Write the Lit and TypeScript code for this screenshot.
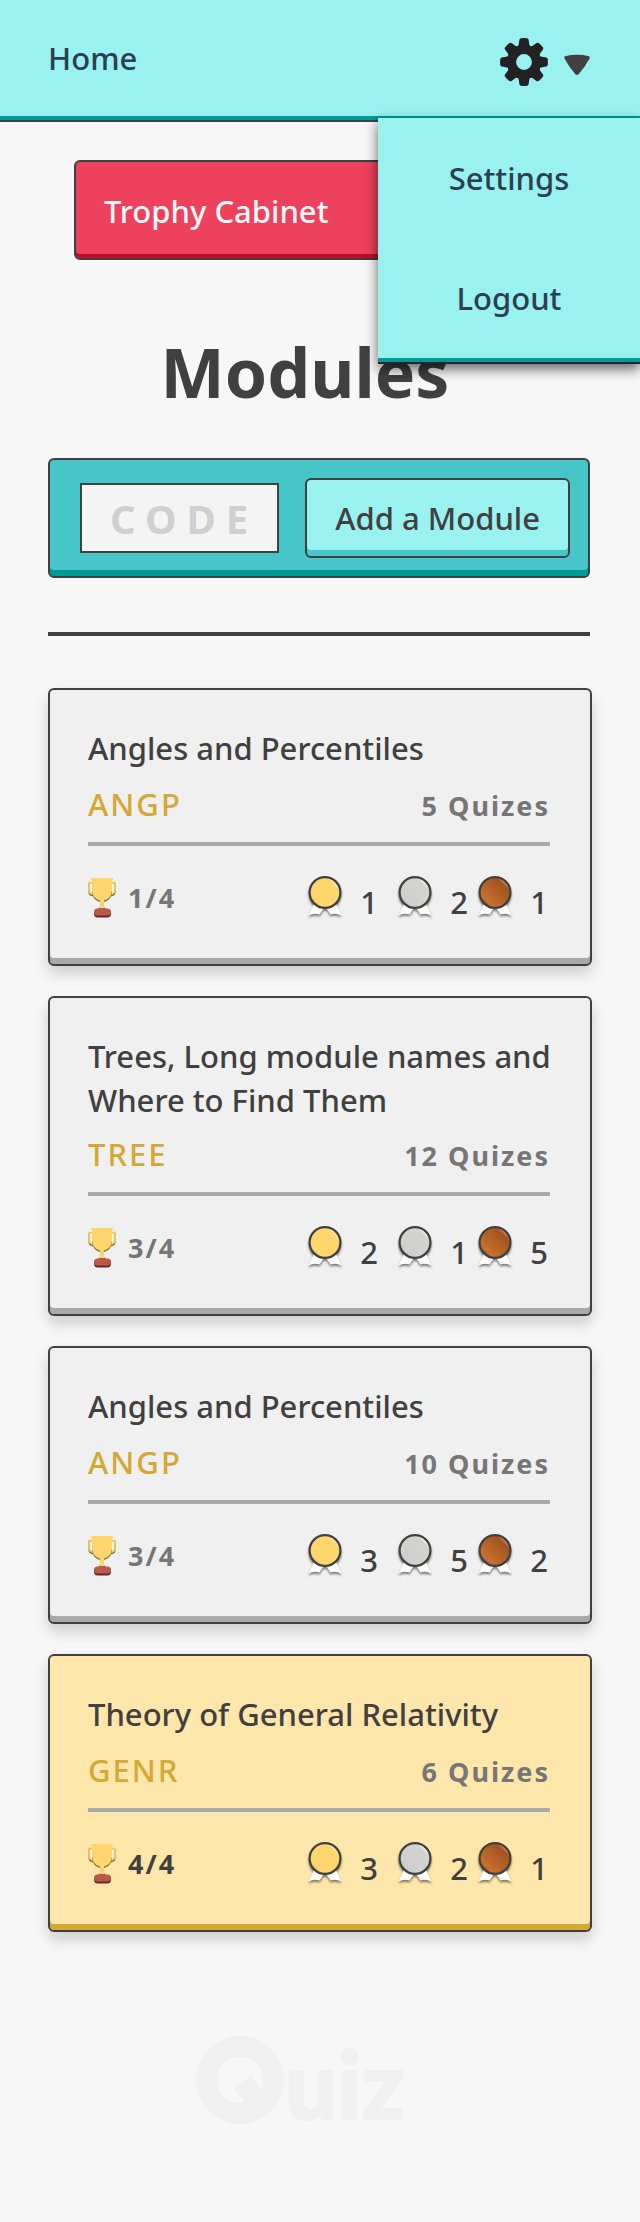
import { LitElement, html, svg, css, nothing } from "lit";
import { customElement, property, state } from "lit/decorators.js";
import { classMap } from "lit/directives/class-map.js";

interface Module {
  name: string;
  code: string;
  quizes: number;
  trophies: number;
  medals: [number, number, number];
}

const MODULES: Module[] = [
  { name: "Angles and Percentiles", code: "ANGP", quizes: 5, trophies: 1, medals: [1, 2, 1] },
  { name: "Trees, Long module names and Where to Find Them", code: "TREE", quizes: 12, trophies: 3, medals: [2, 1, 5] },
  { name: "Angles and Percentiles", code: "ANGP", quizes: 10, trophies: 3, medals: [3, 5, 2] },
  { name: "Theory of General Relativity", code: "GENR", quizes: 6, trophies: 4, medals: [3, 2, 1] },
];

const MEDAL_KINDS = ["gold", "silver", "bronze"] as const;
type MedalKind = (typeof MEDAL_KINDS)[number];

const MEDAL_COLOURS: Record<MedalKind, [string, string, string, string]> = {
  // lower edge, face start, face end, upper glint
  gold: ["#dcae45", "#ffd56e", "#ffd56e", "#ffe7ab"],
  silver: ["#b4b4b2", "#cfcfcd", "#d2d2d0", "#f3f3f3"],
  bronze: ["#8a4014", "#c8702f", "#a0531f", "#d38350"],
};

@customElement("medal-icon")
class MedalIcon extends LitElement {
  @property() kind: MedalKind = "gold";

  static styles = css`
    :host { display: block; }
    .medal { display: block; width: 34px; height: 48px; overflow: visible; }
    .shaded { filter: drop-shadow(0 2px 1px rgba(0, 0, 0, 0.5)); }
  `;

  render() {
    const [edge, from, to, glint] = MEDAL_COLOURS[this.kind];
    return html`
      <svg class="medal" viewBox="0 0 34 48" role="img" aria-label="${this.kind} medals">
        <defs>
          <linearGradient id="face" x1="0.12" y1="0.88" x2="0.88" y2="0.12">
            <stop offset="0" stop-color=${edge} />
            <stop offset="0.14" stop-color=${from} />
            <stop offset="0.84" stop-color=${to} />
            <stop offset="0.92" stop-color=${glint} />
            <stop offset="1" stop-color=${glint} />
          </linearGradient>
        </defs>
        <g class="shaded">
          <path fill="#fff" d="M6 28 L0.5 39.5 Q6 36.5 11.5 38.5 L16.5 31 Z" />
          <path fill="#fff" d="M28 28 L33.5 39.5 Q28 36.5 22.5 38.5 L17.5 31 Z" />
          <circle cx="17" cy="16.5" r="15.4" fill="url(#face)" stroke="#404040" stroke-width="2.2" />
        </g>
      </svg>
    `;
  }
}

@customElement("module-card")
class ModuleCard extends LitElement {
  @property({ attribute: false }) module!: Module;

  static styles = css`
    :host { display: block; }
    .card {
      box-sizing: border-box;
      padding: 36px 30px 40px 38px;
      border: 2px solid #404040;
      border-radius: 6px;
      background: #f0f0f0;
      box-shadow: inset 0 -6px #a9a9a9, 0 8px 14px rgba(0, 0, 0, 0.16);
    }
    .complete {
      background: #ffe6aa;
      box-shadow: inset 0 -6px #d4a834, 0 8px 14px rgba(0, 0, 0, 0.16);
    }
    .name {
      margin: 0;
      min-height: 46px;
      font-size: 31px;
      line-height: 44px;
      font-weight: 500;
    }
    .details { padding-right: 10px; }
    .meta {
      display: flex;
      justify-content: space-between;
      align-items: baseline;
      margin-top: 10px;
      padding-bottom: 14px;
      border-bottom: 4px solid #a9a9a9;
      line-height: 44px;
      letter-spacing: 2px;
    }
    .code { font-size: 31px; color: #d4a834; }
    .quizes { font-size: 27px; font-weight: 700; color: #767676; }
    .scores {
      display: flex;
      justify-content: space-between;
      align-items: flex-start;
      padding: 30px 2px 0 0;
      line-height: 44px;
    }
    .trophies {
      display: flex;
      gap: 12px;
      font-size: 27px;
      font-weight: 700;
      letter-spacing: 2px;
      color: #767676;
    }
    .complete .trophies { color: #404040; }
    .trophy { display: block; width: 28px; height: 44px; }
    .medals { display: flex; gap: 10px; margin: 0; padding: 0; list-style: none; }
    .item { display: flex; align-items: flex-end; gap: 18px; }
    .item:first-child { margin-right: 10px; }
    .count { min-width: 18px; text-align: center; font-size: 31px; }
  `;

  render() {
    const { name, code, quizes, trophies, medals } = this.module;
    return html`
      <article class=${classMap({ card: true, complete: trophies === 4 })}>
        <h2 class="name">${name}</h2>
        <div class="details">
          <div class="meta">
            <span class="code">${code}</span>
            <span class="quizes">${quizes} Quizes</span>
          </div>
          <div class="scores">
            <div class="trophies">
              <svg class="trophy" viewBox="0 0 28 44" role="img" aria-label="Trophies">
                <path d="M5 8 H1.5 V16 Q1.5 19 6 19.5 M23 8 H26.5 V16 Q26.5 19 22 19.5" fill="none" stroke="#7d6a34" stroke-width="2.2" />
                <path d="M5 6.8 H1.2 V14.5 Q1.5 18 6 18.4 M23 6.8 H26.8 V14.5 Q26.5 18 22 18.4" fill="#fafafa" stroke="#f3c75d" stroke-width="2" />
                <path d="M4 4 V17 Q5 24 12 26 V31 L9.5 33.5 H18.5 L16 31 V26 Q23 24 24 17 V4 Z" fill="#8a7233" />
                <path d="M3 2 H25 V4 H24 V15 Q23 23 16 24.5 Q15.5 29 16.5 32 H11.5 Q12.5 29 12 24.5 Q5 23 4 15 V4 H3 Z" fill="#ffd56e" />
                <rect x="6" y="34" width="17" height="7.5" rx="3.7" fill="#652a22" />
                <rect x="6" y="32.5" width="17" height="7" rx="3.5" fill="#bd5747" />
              </svg>
              <span>${trophies}/4</span>
            </div>
            <ul class="medals">
              ${MEDAL_KINDS.map(
                (kind, i) => html`
                  <li class="item">
                    <medal-icon kind=${kind}></medal-icon>
                    <span class="count">${medals[i]}</span>
                  </li>
                `,
              )}
            </ul>
          </div>
        </div>
      </article>
    `;
  }
}

@customElement("app-root")
class AppRoot extends LitElement {
  @state() private menuOpen = true;

  static styles = css`
    :host {
      display: block;
      min-height: 100vh;
      background: #f7f7f7;
      color: #404040;
      font-family: "Noto Sans", "Open Sans", sans-serif;
      font-size: 31px;
      font-weight: 500;
    }
    .bar {
      position: relative;
      z-index: 1;
      display: flex;
      justify-content: space-between;
      align-items: center;
      padding: 0 50px 4px 48px;
      border-bottom: 2px solid #404040;
      background: #99f1f0;
      box-shadow: inset 0 -4px #009a9a;
    }
    .link {
      color: #2c3e50;
      line-height: 116px;
      text-decoration: none;
    }
    .toggle {
      display: flex;
      align-items: center;
      gap: 16px;
      padding: 8px 0 0;
      border: 0;
      background: none;
    }
    .gear { width: 48px; height: 48px; }
    .arrow { width: 26px; height: 22px; margin-top: 6px; }
    .menu {
      position: absolute;
      top: 118px;
      right: 0;
      width: 262px;
      padding-bottom: 4px;
      border-bottom: 2px solid #222;
      background: #99f1f0;
      box-shadow: inset 0 -4px #009a9a, 0 5px 12px rgba(0, 0, 0, 0.6);
    }
    .option {
      display: block;
      color: #2c3e50;
      line-height: 120px;
      text-align: center;
      text-decoration: none;
    }
    .page { padding: 38px 48px 0; }
    .top { margin-right: 2px; }
    .button {
      box-sizing: border-box;
      border: 2px solid #404040;
      border-radius: 6px;
      padding: 6px 28px;
      color: inherit;
      font: inherit;
      cursor: pointer;
    }
    .cabinet {
      display: flex;
      align-items: center;
      height: 100px;
      margin: 0 26px;
      padding-bottom: 4px;
      background: #ed415d;
      box-shadow: inset 0 -4px #bd0f2a;
      color: #f7f7f7;
      text-decoration: none;
    }
    .title {
      margin: 72px 28px 46px 0;
      font-size: 68px;
      font-weight: 700;
      line-height: 80px;
      text-align: center;
    }
    .join {
      display: flex;
      align-items: center;
      gap: 26px;
      padding: 18px 18px 18px 30px;
      border: 2px solid #404040;
      border-radius: 6px;
      background: #46c6c8;
      box-shadow: inset 0 -6px #009a9a;
    }
    .entry {
      box-sizing: border-box;
      flex: 1;
      min-width: 0;
      height: 70px;
      padding: 0 0 0 28px;
      border: 2px solid #404040;
      border-radius: 0;
      background: #f4f4f4;
      color: #404040;
      font: 700 40px "Noto Sans", "Open Sans", sans-serif;
      letter-spacing: 10px;
    }
    .entry::placeholder { color: #d0d0d0; opacity: 1; }
    .add {
      height: 80px;
      background: #99f1f0;
      box-shadow: inset 0 -6px #46c6c8;
      white-space: nowrap;
    }
    .rule {
      height: 4px;
      margin: 54px 0 52px;
      border: 0;
      background: #404040;
    }
    .modules { display: grid; gap: 30px; }
    .footer {
      display: flex;
      justify-content: center;
      padding: 104px 32px 78px 0;
    }
    .logo {
      width: 216px;
      height: 108px;
      fill: #f0f0f0;
      font: 900 93px Lato, sans-serif;
    }
    .ring { fill: none; stroke: #f0f0f0; stroke-width: 21; }
    .word { stroke: #f0f0f0; stroke-width: 2; }
  `;

  private toggleMenu() {
    this.menuOpen = !this.menuOpen;
  }

  render() {
    return html`
      <header class="bar">
        <a class="link" href="#home">Home</a>
        <button
          class="toggle"
          aria-label="Account menu"
          aria-expanded=${this.menuOpen ? "true" : "false"}
          @click=${this.toggleMenu}
        >
          <svg class="gear" viewBox="-24 -24 48 48" aria-hidden="true">
            <circle r="12.5" fill="none" stroke="#222" stroke-width="9.2" />
            ${[0, 45, 90, 135, 180, 225, 270, 315].map(
              (angle) => svg`<path transform="rotate(${angle})" fill="#222"
                d="M-7 -15 Q-5.5 -16 -5.2 -18 L-4.6 -22.3 Q-4.4 -23.5 -3 -23.7 Q0 -24.1 3 -23.7 Q4.4 -23.5 4.6 -22.3 L5.2 -18 Q5.5 -16 7 -15 Z" />`,
            )}
          </svg>
          <svg class="arrow" viewBox="0 0 26 22" aria-hidden="true">
            <path fill="#404040" d="M1 2.2 Q13 -0.6 25 2.2 Q26.3 3 25.4 4.8 Q21 13 14.6 20.2 Q13 21.8 11.4 20.2 Q5 13 0.6 4.8 Q-0.3 3 1 2.2 Z" />
          </svg>
        </button>
        ${this.menuOpen
          ? html`
              <nav class="menu" aria-label="Account">
                <a class="option" href="#settings">Settings</a>
                <a class="option" href="#logout">Logout</a>
              </nav>
            `
          : nothing}
      </header>
      <main class="page">
        <div class="top">
          <a class="button cabinet" href="#trophies">Trophy Cabinet</a>
          <h1 class="title">Modules</h1>
          <form class="join" @submit=${(e: Event) => e.preventDefault()}>
            <input class="entry" type="text" aria-label="Module code" placeholder="CODE" maxlength="4" />
            <button class="button add" type="submit">Add a Module</button>
          </form>
          <hr class="rule" />
        </div>
        <section class="modules" aria-label="Your modules">
          ${MODULES.map((m) => html`<module-card .module=${m}></module-card>`)}
        </section>
      </main>
      <footer class="footer">
        <svg class="logo" viewBox="0 0 216 108" role="img" aria-label="Quiz">
          <circle class="ring" cx="44" cy="44" r="33.5" />
          <path d="M55 39.5 L38 51.5 L50 69 L67 56 Z" />
          <text class="word" x="89" y="83">uiz</text>
        </svg>
      </footer>
    `;
  }
}
